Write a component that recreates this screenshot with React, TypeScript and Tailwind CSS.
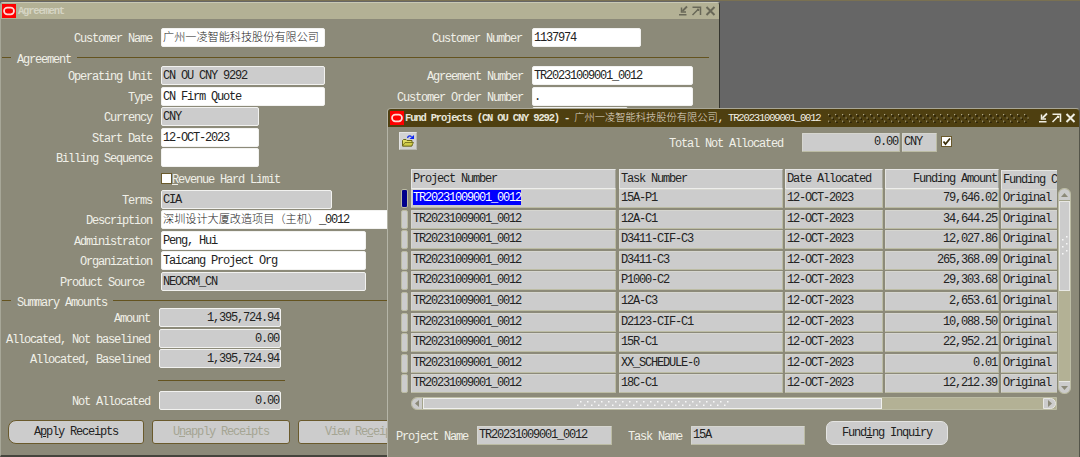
import type { ReactNode } from 'react';

const rows = [
  { task: '15A-P1', amount: '79,646.02' },
  { task: '12A-C1', amount: '34,644.25' },
  { task: 'D3411-CIF-C3', amount: '12,027.86' },
  { task: 'D3411-C3', amount: '265,368.09' },
  { task: 'P1000-C2', amount: '29,303.68' },
  { task: '12A-C3', amount: '2,653.61' },
  { task: 'D2123-CIF-C1', amount: '10,088.50' },
  { task: '15R-C1', amount: '22,952.21' },
  { task: 'XX_SCHEDULE-0', amount: '0.01' },
  { task: '18C-C1', amount: '12,212.39' },
];

function OracleLogo() {
  return (
    <svg width="14" height="14" viewBox="0 0 14 14" className="shrink-0">
      <rect width="14" height="14" fill="#fe0000" />
      <rect x="2" y="3.700" width="10" height="6.600" rx="3.300" fill="none" stroke="#ffd9d5" strokeWidth="1.7" />
    </svg>
  );
}

function WindowControls({ color }: { color: string }) {
  return (
    <svg width="38" height="12" viewBox="0 0 38 12" fill="none" stroke={color} strokeWidth="1.5" className="shrink-0">
      <path d="M9 1.500 4.500 6" strokeWidth="1.800" />
      <path d="M3.500 2.500v4.500H8M1 9.700h7.500" />
      <path d="M14.500 2.200h8V10M20.500 4 14.500 10" />
      <path d="M19 4.500h1.500V6" />
      <path d="M28.500 2l8 8M36.500 2l-8 8" strokeWidth="2" />
    </svg>
  );
}

function Field({ children, className = '' }: { children?: ReactNode; className?: string }) {
  return (
    <div className={`h-[19px] shrink-0 rounded-[2px] border border-[#f2f2f0] pl-px pr-px leading-[18px] whitespace-pre text-[#222] overflow-hidden ${className}`}>
      {children}
    </div>
  );
}

function FormRow({ label, children, labelClass = '' }: { label: string; children: ReactNode; labelClass?: string }) {
  return (
    <div className="flex h-[20.6px] items-start">
      <div className={`w-[152px] shrink-0 pt-[3px] text-right leading-[17px] text-[#f0f0e8] whitespace-pre ${labelClass}`}>{label}</div>
      <div className="ml-[9px] flex">{children}</div>
    </div>
  );
}

function Legend({ text }: { text: string }) {
  return (
    <div className="flex h-[12px] items-center pl-px">
      <div className="mb-[3px] h-px w-[9px] bg-[#64531f]" />
      <div className="mt-[2px] ml-[6px] leading-[12px] text-[#f0f0e8]">{text}</div>
      <div className="mb-[3px] ml-[6px] mr-[10px] h-px flex-1 bg-[#64531f]" />
    </div>
  );
}

function Cell({ children, className = '' }: { children?: ReactNode; className?: string }) {
  return (
    <div className={`h-[19px] shrink-0 overflow-hidden rounded-[1px] border border-t-[#d6d6d0] border-l-[#d6d6d0] border-r-[#bcbca4] border-b-[#bcbca4] bg-[#cccccc] pl-px pr-px leading-[17px] whitespace-pre text-[#222] ${className}`}>
      {children}
    </div>
  );
}

function HeadCell({ children, className = '' }: { children: ReactNode; className?: string }) {
  return (
    <div className={`h-[20px] shrink-0 overflow-hidden border border-t-[#e6e6e4] border-l-[#e6e6e4] border-r-[#a5a59a] border-b-[#eeeeec] bg-[#cccccc] px-px leading-[19px] whitespace-pre text-[#222] ${className}`}>
      {children}
    </div>
  );
}

function AgreementWindow() {
  return (
    <div className="absolute top-px left-0 flex h-[455px] w-[720px] flex-col overflow-hidden rounded-t-[3px] border-t border-r border-b-2 border-l border-t-[#c8c8b4] border-r-[#35352f] border-b-[#45453d] border-l-[#a7a798] bg-[#8c8a79]">
      <div className="flex h-[16px] shrink-0 items-center bg-[#b3b195] pr-[3px] pl-px">
        <OracleLogo />
        <span className="mt-[2px] ml-[2px] text-[10.5px] font-bold tracking-[-1.2px] text-[#d6d5c4]">Agreement</span>
        <span className="flex-1" />
        <WindowControls color="#696858" />
      </div>

      <div className="mt-[9px] flex h-[19px] shrink-0">
        <div className="w-[151px] shrink-0 pt-[3px] text-right leading-[17px] text-[#f0f0e8]">Customer Name</div>
        <Field className="ml-[9px] w-[164px] bg-white">
          <span className="text-[11.15px] font-light tracking-normal">广州一凌智能科技股份有限公司</span>
        </Field>
        <div className="w-[197px] shrink-0 pt-[3px] text-right leading-[17px] text-[#f0f0e8]">Customer Number</div>
        <Field className="ml-[10px] w-[109px] bg-white">1137974</Field>
      </div>

      <div className="mt-[6px] shrink-0">
        <Legend text="Agreement" />
      </div>

      <div className="-ml-px mt-[1px] flex shrink-0">
        <div className="w-[390px] shrink-0">
          <FormRow label="Operating Unit"><Field className="w-[164px] bg-[#cccccc]">CN OU CNY 9292</Field></FormRow>
          <FormRow label="Type"><Field className="w-[164px] bg-white">CN Firm Quote</Field></FormRow>
          <FormRow label="Currency"><Field className="w-[98px] bg-[#cccccc]">CNY</Field></FormRow>
          <FormRow label="Start Date"><Field className="w-[98px] bg-white">12-OCT-2023</Field></FormRow>
          <FormRow label="Billing Sequence"><Field className="w-[98px] bg-white" /></FormRow>
          <FormRow label="">
            <div className="mt-[4px] size-[11px] border border-[#6a5a2c] bg-white" />
            <span className="pt-[3px] leading-[17px] text-[#f0f0e8]"><u>R</u>evenue Hard Limit</span>
          </FormRow>
          <FormRow label="Terms"><Field className="w-[171px] bg-[#cccccc]">CIA</Field></FormRow>
          <FormRow label="Description">
            <Field className="w-[240px] bg-white"><span className="text-[11.15px] font-light tracking-normal">深圳设计大厦改造项目（主机）</span>_0012</Field>
          </FormRow>
          <FormRow label="Administrator"><Field className="w-[205px] bg-white">Peng, Hui</Field></FormRow>
          <FormRow label="Organization"><Field className="w-[205px] bg-white">Taicang Project Org</Field></FormRow>
          <FormRow label="Product Source" labelClass="pr-[8px]"><Field className="w-[205px] bg-[#cccccc]">NEOCRM_CN</Field></FormRow>
        </div>
        <div className="-ml-[19px]">
          <FormRow label="Agreement Number"><Field className="w-[161px] bg-white">TR20231009001_0012</Field></FormRow>
          <FormRow label="Customer Order Number"><Field className="w-[161px] bg-white">.</Field></FormRow>
          <FormRow label=""><Field className="w-[96px] bg-[#cccccc]" /></FormRow>
        </div>
      </div>

      <div className="mt-[3px] shrink-0">
        <Legend text="Summary Amounts" />
      </div>

      <div className="-ml-[3px] mt-[0.6px] shrink-0">
        <FormRow label="Amount"><Field className="w-[122px] bg-[#cccccc] text-right">1,395,724.94</Field></FormRow>
        <FormRow label="Allocated, Not baselined"><Field className="w-[122px] bg-[#cccccc] text-right">0.00</Field></FormRow>
        <FormRow label="Allocated, Baselined"><Field className="w-[122px] bg-[#cccccc] text-right">1,395,724.94</Field></FormRow>
        <FormRow label=""><div className="mt-[10px] -ml-px h-px w-[127px] bg-[#64531f]" /></FormRow>
        <FormRow label="Not Allocated"><Field className="w-[122px] bg-[#cccccc] text-right">0.00</Field></FormRow>
      </div>

      <div className="mt-[9.4px] ml-[7px] flex shrink-0 gap-[8px] text-center leading-[23px]">
        <div className="h-[24px] w-[136px] rounded-[3px] rounded-l-[8px] border border-[#6a5a2c] bg-[#cccccc] text-[#222]">A<u>p</u>ply Receipts</div>
        <div className="h-[24px] w-[138px] rounded-[3px] border border-[#6a5a2c] bg-[#cccccc] text-[#a5a593]">U<u>n</u>apply Receipts</div>
        <div className="h-[24px] w-[138px] rounded-[3px] border border-[#6a5a2c] bg-[#cccccc] pl-[26px] text-left text-[#a5a593]">View Re<u>c</u>eipts</div>
      </div>
    </div>
  );
}

function FundProjectsWindow() {
  return (
    <div className="absolute top-[107px] left-[387px] flex h-[351px] w-[693px] flex-col overflow-hidden rounded-t-[4px] border-t border-r border-l border-t-[#a9a797] border-r-[#55554a] border-l-[#b5b5a8] bg-[#8c8a79]">
      <div className="flex h-[18px] shrink-0 items-center bg-[#4e3f10] pr-[3px] pl-[2px]">
        <OracleLogo />
        <span className="mt-px ml-px text-[10.5px] font-bold tracking-[-1.17px] whitespace-pre text-[#e8e6da]">Fund Projects (CN OU CNY 9292) - </span>
        <span className="mt-px text-[10.25px] font-light tracking-normal text-[#e0dccd]">广州一凌智能科技股份有限公司</span>
        <span className="mt-px text-[10.5px] tracking-[-1.17px] whitespace-pre text-[#f2f0e6]">, TR20231009001_0012</span>
        <svg className="ml-[7px] shrink-0" width="202" height="10">
          <defs>
            <pattern id="grip-dark" width="7" height="6.700" patternUnits="userSpaceOnUse">
              <path d="M1 1h1.200v1.200H1zM4.500 4.300h1.200v1.200H4.500z" fill="#b5ad90" />
              <path d="M2.200 2.200h1.400v1.400H2.200zM5.600 5.400h1.300v1.300H5.600z" fill="#120d00" />
            </pattern>
          </defs>
          <rect width="202" height="10" fill="url(#grip-dark)" />
        </svg>
        <span className="flex-1" />
        <WindowControls color="#f0eee2" />
      </div>

      <div className="mt-[5px] flex h-[20px] shrink-0 items-start pl-[11px]">
        <div className="flex size-[18px] items-center justify-center border border-t-[#e4e4e4] border-l-[#e4e4e4] border-r-[#b8b8b0] border-b-[#b8b8b0] bg-[#d2d2d2]">
          <svg width="14" height="14" viewBox="0 0 14 14">
            <path d="M1.500 12V6.500l1-1h2.500l1 1h5V12z" fill="#e0dc60" stroke="#6b6718" />
            <path d="M1.500 12 4 8.500h8.500L10.500 12z" fill="#d0cc48" stroke="#6b6718" strokeWidth=".8" />
            <path d="M6.500 4C7 1.500 9.500 1.500 10.500 3" fill="none" stroke="#1a32e8" strokeWidth="1.300" />
            <path d="M8.500 5h4.500V1z" fill="#0b24f5" />
          </svg>
        </div>
        <div className="w-[366px] pt-[4px] text-right leading-[17px] text-[#f0f0e8]">Total Not Allocated</div>
        <Cell className="mt-px ml-[19px] w-[98px] text-right">0.00</Cell>
        <Cell className="mt-px ml-[2px] w-[35px]">CNY</Cell>
        <svg className="mt-[4px] ml-[4px]" width="11" height="11" viewBox="0 0 11 11">
          <rect x=".5" y=".5" width="10" height="10" fill="#fff" stroke="#6a5a2c" />
          <path d="M2.500 5.500 4.500 8 9 2.500" fill="none" stroke="#3c300c" strokeWidth="1.800" />
        </svg>
      </div>

      <div className="mt-[17px] flex shrink-0">
        <div className="ml-[12px] w-[657px] shrink-0 overflow-hidden">
          <div className="flex h-[20px] pl-[11px]">
            <HeadCell className="w-[205px]">Project Number</HeadCell>
            <HeadCell className="ml-[3px] w-[164px]">Task Number</HeadCell>
            <HeadCell className="ml-[2px] w-[98px]">Date Allocated</HeadCell>
            <HeadCell className="ml-[2px] w-[114px] text-right">Funding Amount</HeadCell>
            <HeadCell className="ml-[2px] mt-px w-[80px]">Funding Category</HeadCell>
          </div>
          {rows.map((row, i) => (
            <div key={row.task} className="flex h-[20.6px] pl-px">
              <div className={`h-[19px] w-[7px] shrink-0 rounded-[2px] border border-[#bcbca4] ${i === 0 ? 'bg-[#00008b]' : 'bg-[#cccccc]'}`} />
              <Cell className="ml-[3px] w-[205px]">
                <span className={i === 0 ? 'inline-block h-[15px] bg-[#0000fe] leading-[16px] text-white' : ''}>TR20231009001_0012</span>
              </Cell>
              <Cell className="ml-[3px] w-[164px]">{row.task}</Cell>
              <Cell className="ml-[2px] w-[98px]">12-OCT-2023</Cell>
              <Cell className="ml-[2px] w-[114px] text-right">{row.amount}</Cell>
              <Cell className="ml-[2px] w-[80px]">Original</Cell>
            </div>
          ))}
        </div>
        <div className="mt-[19px] ml-px flex h-[206px] w-[13px] flex-col rounded-[6px] border border-[#bcbca4] bg-[#b3b195]">
          <div className="flex h-[12px] shrink-0 items-center justify-center rounded-t-[6px] border-b border-[#a5a58c] bg-[#cccccc]">
            <svg width="7" height="4"><path d="M0 4 3.500 0 7 4z" fill="#8c8a79" /></svg>
          </div>
          <div className="flex h-[90px] items-center justify-center border border-[#e8e8e4] bg-[#cccccc]">
            <svg width="8" height="22">
              <defs>
                <pattern id="grip-v" width="8" height="7" patternUnits="userSpaceOnUse">
                  <path d="M1 4h1.500v1.500H1zM5 1h1.500v1.500H5z" fill="#f8f8f8" />
                </pattern>
              </defs>
              <rect width="8" height="22" fill="url(#grip-v)" />
            </svg>
          </div>
          <div className="flex-1" />
          <div className="flex h-[12px] items-center justify-center rounded-b-[6px] border-t border-[#e8e8e4] bg-[#cccccc]">
            <svg width="7" height="4"><path d="M0 0 3.500 4 7 0z" fill="#8c8a79" /></svg>
          </div>
        </div>
      </div>

      <div className="mt-[2px] ml-[23px] flex h-[13px] w-[646px] shrink-0 rounded-l-[6px] border border-[#bcbca4] bg-[#b3b195]">
        <div className="flex w-[11px] items-center justify-center rounded-l-[6px] border-r border-[#a5a58c] bg-[#cccccc]">
          <svg width="4" height="7"><path d="M4 0 0 3.500 4 7z" fill="#8c8a79" /></svg>
        </div>
        <div className="flex w-[459px] items-center justify-center border border-[#f0f0ee] bg-[#cccccc]">
          <svg width="154" height="7">
            <defs>
              <pattern id="grip-h" width="7" height="7" patternUnits="userSpaceOnUse">
                <path d="M1 4.500h1.500V6H1zM4 1h1.500v1.500H4z" fill="#f8f8f8" />
              </pattern>
            </defs>
            <rect width="154" height="7" fill="url(#grip-h)" />
          </svg>
        </div>
        <div className="flex-1" />
        <div className="flex w-[13px] items-center justify-center rounded-r-[6px] border border-[#e8e8e4] bg-[#cccccc]">
          <svg width="4" height="7"><path d="M0 0 4 3.500 0 7z" fill="#8c8a79" /></svg>
        </div>
      </div>

      <div className="mt-[10px] flex shrink-0 items-start">
        <div className="mt-[9px] w-[80px] text-right leading-[17px] text-[#f0f0e8]">Project Name</div>
        <Cell className="mt-[6px] ml-[9px] w-[135px]">TR20231009001_0012</Cell>
        <div className="mt-[9px] w-[70px] text-right leading-[17px] text-[#f0f0e8]">Task Name</div>
        <Cell className="mt-[6px] ml-[9px] w-[114px]">15A</Cell>
        <div className="mt-px ml-[21px] h-[24px] w-[122px] rounded-[7px] border border-[#e4e4e2] bg-[#cccccc] text-center leading-[23px] text-[#222]">Fund<u>i</u>ng Inquiry</div>
      </div>
    </div>
  );
}

export default function App() {
  return (
    <div className="relative h-[457px] w-[1080px] overflow-hidden border-t border-[#7a7152] bg-[#666666] font-['Liberation_Mono','Noto_Sans_CJK_SC',monospace] text-[12px] tracking-[-1.2px]">
      <AgreementWindow />
      <FundProjectsWindow />
    </div>
  );
}
